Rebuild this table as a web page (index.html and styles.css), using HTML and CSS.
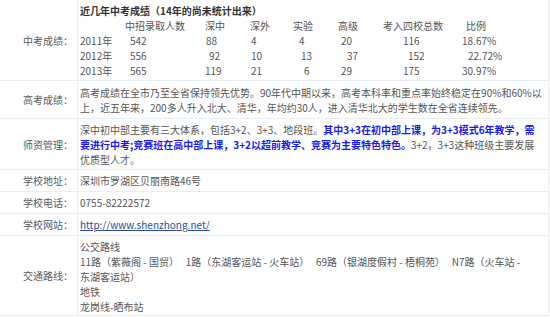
FILE: index.html
```html
<!DOCTYPE html>
<html lang="zh-CN">
<head>
<meta charset="utf-8">
<title>深圳中学</title>
<link rel="stylesheet" href="styles.css">
</head>
<body>
<table class="info">
  <tr class="r-exam">
    <th class="label">中考成绩：</th>
    <td class="content">
      <div class="title">近几年中考成绩（14年的尚未统计出来）</div>
      <div class="scores">
        <span></span><span>中招录取人数</span><span>深中</span><span>深外</span><span>实验</span><span>高级</span><span>考入四校总数</span><span class="i4">比例</span>
        <span>2011年</span><span class="i5">542</span><span class="i1">88</span><span class="i1">4</span><span class="i6">4</span><span class="i3">20</span><span class="i20">116</span><span>18.67%</span>
        <span>2012年</span><span class="i5">556</span><span class="i4">92</span><span class="i1">10</span><span class="i8">13</span><span class="i9">37</span><span class="i25">152</span><span class="i6">22.72%</span>
        <span>2013年</span><span class="i5">565</span><span>119</span><span class="i1">21</span><span class="i11">6</span><span class="i3">29</span><span class="i20">175</span><span>30.97%</span>
      </div>
    </td>
  </tr>
  <tr class="r-gk">
    <th class="label">高考成绩：</th>
    <td class="content">高考成绩在全市乃至全省保持领先优势。90年代中期以来，高考本科率和重点率始终稳定在90%和60%以<br>上，近五年来，200多人升入北大、清华，年均约30人，进入清华北大的学生数在全省连续领先。</td>
  </tr>
  <tr class="r-sz">
    <th class="label">师资管理：</th>
    <td class="content">深中初中部主要有三大体系，包括3+2、3+3、地段班。<strong class="hl">其中3+3在初中部上课，为3+3模式6年教学，需<br>要进行中考;竞赛班在高中部上课，3+2以超前教学、竞赛为主要特色特色。</strong>3+2，3+3这种班级主要发展<br>优质型人才。</td>
  </tr>
  <tr class="r-single">
    <th class="label">学校地址：</th>
    <td class="content">深圳市罗湖区贝丽南路46号</td>
  </tr>
  <tr class="r-single">
    <th class="label">学校电话：</th>
    <td class="content">0755-82222572</td>
  </tr>
  <tr class="r-single">
    <th class="label">学校网站：</th>
    <td class="content"><a class="link" href="#">http://www.shenzhong.net/</a></td>
  </tr>
  <tr class="r-traffic">
    <th class="label">交通路线：</th>
    <td class="content">公交路线<br>11路（紫薇阁 - 国贸）&nbsp;&nbsp;&nbsp;1路（东湖客运站 - 火车站）&nbsp;&nbsp;&nbsp;69路（银湖度假村 - 梧桐苑）&nbsp;&nbsp;&nbsp;N7路（火车站 -<br>东湖客运站）<br>地铁<br>龙岗线-晒布站</td>
  </tr>
</table>
</body>
</html>
```

FILE: styles.css
```css
html, body {
  margin: 0;
  padding: 0;
  background: #ffffff;
}

body {
  font-family: "Noto Sans CJK SC", "Microsoft YaHei", sans-serif;
  font-size: 10px;
  line-height: 15px;
  color: #555555;
  text-spacing-trim: space-all;
}

.info {
  width: 549px;
  border-collapse: collapse;
  border-spacing: 0;
}

.info th,
.info td {
  border-bottom: 1px solid #e6eef6;
  border-right: 1px solid #e6eef6;
  vertical-align: middle;
}

.label {
  width: 72px;
  padding: 0 4px 0 1px;
  text-align: right;
  font-weight: normal;
  color: #5a5a5a;
  white-space: nowrap;
}

.content {
  padding: 0 2px 0 2px;
  text-align: left;
  white-space: nowrap;
}

.r-exam td, .r-exam th { padding-top: 3px; padding-bottom: 2px; }
.r-gk td { padding-top: 4px; padding-bottom: 3px; }
.r-sz td { padding-top: 3px; padding-bottom: 2px; }
.r-single td { padding-top: 3px; padding-bottom: 3px; }
.r-traffic td { padding-top: 3px; padding-bottom: 1px; }

.title {
  font-weight: bold;
  color: #333333;
}

.scores {
  display: grid;
  grid-template-columns: 45px 80px 45px 43px 45px 45px 79px 1fr;
}

.scores span {
  display: block;
  white-space: nowrap;
}

.i1 { padding-left: 1px; }
.i3 { padding-left: 3px; }
.i4 { padding-left: 4px; }
.i5 { padding-left: 5px; }
.i6 { padding-left: 6px; }
.i8 { padding-left: 8px; }
.i9 { padding-left: 9px; }
.i11 { padding-left: 11px; }
.i20 { padding-left: 20px; }
.i25 { padding-left: 25px; }

.hl {
  color: #1a1aee;
  font-weight: bold;
}

.link {
  color: #2b4c9a;
  text-decoration: underline;
}
```
